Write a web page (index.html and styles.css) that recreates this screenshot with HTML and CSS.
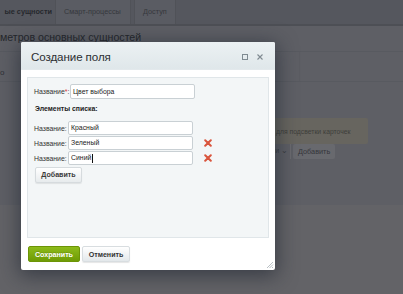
FILE: index.html
```html
<!DOCTYPE html>
<html lang="ru">
<head>
<meta charset="utf-8">
<link rel="stylesheet" href="styles.css">
</head>
<body>
<div class="page">
  <div class="tabs">
    <div class="tab tab-active">ые сущности</div>
    <div class="tab">Смарт-процессы</div>
    <div class="tab">Доступ</div>
  </div>
  <div class="heading">метров основных сущностей</div>
  <div class="row row-a"><span class="edge">о</span><span class="divider"></span></div>
  <div class="row row-b">
    <div class="hint">для подсветки карточек</div>
  </div>
  <div class="row row-c">
    <div class="sel">и <span class="chev">&#8964;</span></div>
    <div class="pbtn">Добавить</div>
  </div>
</div>

<div class="dialog">
  <div class="dlg-head">
    <div class="dlg-title">Создание поля</div>
    <div class="dlg-icons">
      <span class="ic-max"></span>
      <svg class="ic-close" width="6" height="6" viewBox="0 0 6 6"><path d="M0.5 0.5L5.5 5.5M5.5 0.5L0.5 5.5" stroke="#7f8a91" stroke-width="1.1"/></svg>
    </div>
  </div>
  <div class="dlg-body">
    <div class="panel">
      <div class="frow first">
        <span class="lbl">Название<span class="req">*</span>:</span>
        <div class="inp wide">Цвет выбора</div>
      </div>
      <div class="section">Элементы списка:</div>
      <div class="list">
        <div class="frow item">
          <span class="lbl">Название:</span>
          <div class="inp">Красный</div>
        </div>
        <div class="frow item">
          <span class="lbl">Название:</span>
          <div class="inp">Зеленый</div>
          <svg class="del" width="8" height="8" viewBox="0 0 8 8"><path d="M1.2 1.2L6.8 6.8M6.8 1.2L1.2 6.8" stroke="#d9553d" stroke-width="2" stroke-linecap="round"/></svg>
        </div>
        <div class="frow item">
          <span class="lbl">Название:</span>
          <div class="inp">Синий<span class="caret"></span></div>
          <svg class="del" width="8" height="8" viewBox="0 0 8 8"><path d="M1.2 1.2L6.8 6.8M6.8 1.2L1.2 6.8" stroke="#d9553d" stroke-width="2" stroke-linecap="round"/></svg>
        </div>
      </div>
      <div class="btn add">Добавить</div>
    </div>
  </div>
  <div class="dlg-foot">
    <div class="btn save">Сохранить</div>
    <div class="btn cancel">Отменить</div>
  </div>
  <svg class="grip" width="8" height="8" viewBox="0 0 8 8"><path d="M7 1L1 7M7 3.5L3.5 7M7 6L6 7" stroke="#b9c0c4" stroke-width="1"/></svg>
</div>
</body>
</html>
```
FILE: styles.css
```css
html, body {
  margin: 0;
  padding: 0;
}
body {
  width: 403px;
  height: 294px;
  overflow: hidden;
  background: #636367;
  font-family: "Liberation Sans", Arial, sans-serif;
  position: relative;
}
.page {
  height: 205px;
  background: #5e5f65;
}
.tabs {
  height: 24px;
  background: #55575e;
  border-bottom: 2px solid #4d4f55;
  display: flex;
  gap: 3px;
}
.tab {
  font-size: 7.3px;
  color: #36383d;
  padding: 0 8px;
  line-height: 24px;
  background: #5a5c63;
  border-left: 1px solid #505258;
  border-right: 1px solid #505258;
}
.tab-active {
  background: transparent;
  border: none;
  font-weight: bold;
  color: #26282d;
  padding: 0;
  width: 52px;
  text-align: right;
}
.tab:nth-child(2) { width: 58px; }
.heading {
  font-size: 10.6px;
  line-height: 12px;
  color: #25272c;
  padding: 5px 0 0 0;
  height: 20px;
  border-bottom: 1px solid #585a60;
}
.row {
  border-bottom: 1px solid #585a60;
  display: flex;
  position: relative;
}
.row-a {
  height: 29px;
}
.edge {
  font-size: 8px;
  color: #2f3136;
  margin: 16px 0 0 0;
}
.divider {
  margin-left: 295px;
  width: 1px;
  background: #5b5c62;
}
.row-b {
  height: 84px;
  padding-left: 270px;
  align-items: flex-start;
  border-bottom: none;
}
.hint {
  margin-top: 36px;
  width: 92px;
  height: 26px;
  background: #67655f;
  border-radius: 2px;
  font-size: 6.8px;
  color: #3e3e3a;
  line-height: 27px;
  padding-left: 6px;
}
.row-c {
  padding-left: 270px;
  border-bottom: none;
  margin-top: -22px;
  align-items: center;
  gap: 2px;
}
.sel {
  font-size: 7px;
  color: #3a3c41;
  width: 18px;
  height: 15px;
  line-height: 14px;
  text-align: right;
  padding-right: 2px;
  border-right: 1px solid #6a6b70;
}
.chev { font-size: 8px; }
.pbtn {
  font-size: 7.3px;
  color: #35363b;
  background: #68696e;
  border-radius: 2px;
  padding: 0 5px;
  height: 15px;
  line-height: 15px;
}

/* dialog */
.dialog {
  position: absolute;
  left: 21px;
  top: 42px;
  width: 254px;
  height: 228px;
  background: #fff;
  border-radius: 2px;
  box-shadow: 0 4px 20px 2px rgba(22, 30, 42, 0.55);
  display: flex;
  flex-direction: column;
}
.dlg-head {
  height: 27px;
  background: linear-gradient(#ecf1f3, #dfe7ea);
  border-radius: 2px 2px 0 0;
  display: flex;
  align-items: center;
  justify-content: space-between;
  padding: 0 12px 0 10px;
  border-bottom: 1px solid #e3e9ec;
}
.dlg-title {
  font-size: 11.6px;
  color: #2b2e31;
  letter-spacing: -0.1px;
  margin-top: 1px;
}
.dlg-icons {
  display: flex;
  align-items: center;
  gap: 9px;
  margin-top: 2px;
}
.ic-max {
  width: 4px;
  height: 4px;
  border: 1px solid #7f8a91;
}
.dlg-body {
  padding: 7px 6px 0 6px;
}
.panel {
  background: #f3f6f7;
  border: 1px solid #e0e6e9;
  padding: 6px 0 0 6px;
  box-sizing: border-box;
  height: 161px;
}
.frow {
  display: flex;
  align-items: center;
}
.lbl {
  font-size: 6.9px;
  color: #333;
  width: 36px;
  flex: none;
}
.req { color: #d33; }
.inp {
  width: 121px;
  height: 12px;
  background: #fff;
  border: 1px solid #c9d0d4;
  border-radius: 2px;
  font-size: 6.9px;
  color: #222;
  line-height: 12px;
  padding-left: 2px;
  display: flex;
  align-items: center;
}
.first .inp {
  height: 13px;
}
.item .lbl { width: 34px; }
.section {
  font-size: 6.9px;
  font-weight: bold;
  color: #222;
  margin: 6px 0 0 1px;
  height: 16px;
}
.list {
  display: flex;
  flex-direction: column;
  gap: 1px;
}
.del {
  margin-left: 11px;
}
.caret {
  display: inline-block;
  width: 1px;
  height: 9px;
  background: #111;
  margin-left: 0.5px;
}
.btn {
  font-size: 7.1px;
  font-weight: bold;
  border-radius: 2px;
  height: 16px;
  line-height: 16px;
  text-align: center;
  box-sizing: border-box;
}
.add {
  width: 47px;
  margin: 2px 0 0 1px;
  color: #3a3a3a;
  background: linear-gradient(#ffffff, #e7ebed);
  border: 1px solid #d6dbde;
  box-shadow: 0 1px 1px rgba(0,0,0,0.08);
  line-height: 14px;
}
.dlg-foot {
  display: flex;
  gap: 2px;
  padding: 8px 0 0 7px;
}
.save {
  width: 52px;
  color: #fff;
  background: linear-gradient(#8dbb1a, #6e9b05);
  border: 1px solid #6c9406;
  text-shadow: 0 -1px 0 rgba(0,0,0,0.15);
}
.cancel {
  width: 48px;
  color: #333;
  background: linear-gradient(#ffffff, #e3e8eb);
  border: 1px solid #d8dde0;
  box-shadow: 0 1px 1px rgba(0,0,0,0.1);
}
.grip {
  position: absolute;
  right: 1px;
  bottom: 1px;
}
```
